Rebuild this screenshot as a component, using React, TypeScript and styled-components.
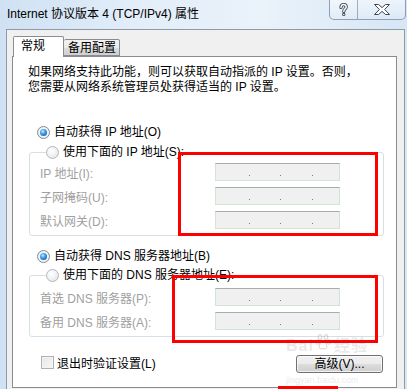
import React from "react";
import styled, { createGlobalStyle } from "styled-components";

const FONT = `"Liberation Sans", "Noto Sans CJK SC", sans-serif`;

const Global = createGlobalStyle`
  html, body { margin: 0; padding: 0; }
  body {
    width: 407px;
    height: 389px;
    overflow: hidden;
    font-family: ${FONT};
    font-size: 12px;
    color: #000;
  }
  * { box-sizing: border-box; }
`;

const Window = styled.div`
  position: relative;
  width: 407px;
  height: 389px;
  overflow: hidden;
  display: flex;
  flex-direction: column;
  background: linear-gradient(90deg, #cfe1f3 0%, #e3eef9 35%, #eaf2fa 65%, #d6e6f5 100%);
`;

const TitleBar = styled.div`
  height: 29px;
  flex: none;
  display: flex;
  align-items: flex-start;
  padding-left: 7px;
`;

const TitleText = styled.div`
  line-height: 29px;
  font-size: 12px;
  color: #000;
  white-space: nowrap;
`;

const CaptionGroup = styled.div`
  margin-left: auto;
  margin-right: 1px;
  display: flex;
  height: 20px;
  border: 1px solid rgba(70, 90, 115, 0.55);
  border-top: none;
  border-radius: 0 0 5px 5px;
  overflow: hidden;
  background: linear-gradient(180deg, rgba(255,255,255,0.55) 0%, rgba(225,236,247,0.35) 100%);
`;

const CaptionButton = styled.div<{ $w: number; $sep?: boolean }>`
  width: ${(p) => p.$w}px;
  height: 100%;
  display: flex;
  align-items: center;
  justify-content: center;
  border-right: ${(p) => (p.$sep ? "1px solid rgba(70, 90, 115, 0.45)" : "none")};
`;

const Client = styled.div`
  flex: 1;
  margin-left: 6px;
  width: 399px;
  background: #f0f0f0;
  border: 1px solid #8e9aa8;
  border-bottom: none;
  padding: 6px 0 1px 5px;
  display: flex;
  flex-direction: column;
`;

const TabRow = styled.div`
  display: flex;
  align-items: flex-end;
  height: 20px;
  margin-left: 1px;
  position: relative;
  z-index: 1;
`;

const Tab = styled.div<{ $active?: boolean; $w: number; $pl: number }>`
  width: ${(p) => p.$w}px;
  height: ${(p) => (p.$active ? 21 : 17)}px;
  margin-bottom: ${(p) => (p.$active ? -1 : 0)}px;
  padding-left: ${(p) => p.$pl}px;
  border: 1px solid #898c95;
  border-bottom: ${(p) => (p.$active ? "none" : "1px solid #898c95")};
  border-left: ${(p) => (p.$active ? "1px solid #898c95" : "none")};
  border-radius: 2px 2px 0 0;
  background: ${(p) => (p.$active ? "#fff" : "linear-gradient(180deg, #f2f2f2 0%, #ebebeb 50%, #dddddd 51%, #cfcfcf 100%)")};
  line-height: ${(p) => (p.$active ? 19 : 16)}px;
  font-size: 12px;
  white-space: nowrap;
`;

const Panel = styled.div`
  flex: 1;
  width: 385px;
  background: #fff;
  border: 1px solid #898c95;
  display: flex;
  flex-direction: column;
`;

const Description = styled.div`
  margin: 8px 0 0 15px;
  line-height: 15px;
  font-size: 12px;
  white-space: nowrap;
`;

const RadioRow = styled.label<{ $mt: number }>`
  display: flex;
  align-items: center;
  height: 16px;
  margin: ${(p) => p.$mt}px 0 0 24px;
  gap: 4px;
  white-space: nowrap;
  font-size: 12px;
  line-height: 16px;
`;

const LegendRow = styled.span`
  display: flex;
  align-items: center;
  height: 16px;
  gap: 4px;
  white-space: nowrap;
  font-size: 12px;
  line-height: 16px;
`;

const RadioCircle = styled.span<{ $checked?: boolean }>`
  position: relative;
  width: 13px;
  height: 13px;
  flex: none;
  border-radius: 50%;
  border: 1px solid ${(p) => (p.$checked ? "#7f8a95" : "#b4b8bc")};
  background: ${(p) =>
    p.$checked
      ? "radial-gradient(circle at 50% 50%, #fff 0%, #e6e9ec 100%)"
      : "radial-gradient(circle at 40% 35%, #ffffff 0%, #eceef0 60%, #d9dde1 100%)"};
  &::after {
    content: "";
    display: ${(p) => (p.$checked ? "block" : "none")};
    position: absolute;
    left: 2px;
    top: 2px;
    width: 7px;
    height: 7px;
    border-radius: 50%;
    background: radial-gradient(circle at 40% 35%, #c9ecff 0%, #4aa6ee 35%, #1460b8 80%, #0b3f86 100%);
  }
`;

const Group = styled.fieldset<{ $pt: number; $mt: number }>`
  margin: ${(p) => p.$mt}px 12px 0 16px;
  padding: ${(p) => p.$pt}px 0 3px 10px;
  border: 1px solid #d5dfe5;
  border-radius: 3px;
  min-width: 0;
`;

const Legend = styled.legend`
  padding: 0 1px 0 0;
  margin-left: 6px;
  height: 16px;
`;

const FieldRow = styled.div`
  display: grid;
  grid-template-columns: 175px 125px;
  align-items: center;
  height: 24px;
`;

const FieldLabel = styled.span`
  color: #a0a0a0;
  white-space: nowrap;
  font-size: 12px;
`;

const IpBox = styled.div`
  height: 18px;
  display: grid;
  grid-template-columns: 33px 1px 30px 1px 31px 1px 1fr;
  align-items: end;
  background: #f0f0f0;
  border: 1px solid #d2e4d2;
  border-top-color: #a9abad;
  padding-bottom: 4px;
`;

const IpDot = styled.span`
  width: 1px;
  height: 1px;
  background: #7a7a7a;
`;

const BottomRow = styled.div`
  margin: 18px 13px 0 28px;
  display: flex;
  align-items: center;
  justify-content: space-between;
`;

const CheckLabel = styled.label`
  display: flex;
  align-items: center;
  gap: 3px;
  font-size: 12px;
  white-space: nowrap;
  margin-top: -3px;
`;

const CheckBox = styled.span`
  width: 13px;
  height: 13px;
  border: 1px solid #b1b1b1;
  background: linear-gradient(135deg, #e6e6e6 0%, #f7f7f7 100%);
  box-shadow: inset 0 0 0 1px #f4f4f4;
`;

const Button = styled.button`
  width: 87px;
  height: 18px;
  padding: 0;
  border: 1px solid #707070;
  border-radius: 3px;
  background: linear-gradient(180deg, #f2f2f2 0%, #ebebeb 50%, #dddddd 51%, #cfcfcf 100%);
  box-shadow: inset 0 0 0 1px rgba(255, 255, 255, 0.7);
  font-family: ${FONT};
  font-size: 12px;
  line-height: 16px;
  color: #000;
`;

const Annotation = styled.div<{ $x: number; $y: number; $w: number; $h: number }>`
  position: absolute;
  left: ${(p) => p.$x}px;
  top: ${(p) => p.$y}px;
  width: ${(p) => p.$w}px;
  height: ${(p) => p.$h}px;
  border: 3px solid #ff0000;
  pointer-events: none;
`;

const Watermark = styled.div`
  position: absolute;
  left: 286px;
  top: 337px;
  display: flex;
  flex-direction: column;
  pointer-events: none;
  color: rgba(140, 140, 140, 0.2);
`;

const WatermarkMain = styled.span`
  display: flex;
  align-items: flex-start;
  font-family: ${FONT};
  font-weight: bold;
  font-size: 16px;
  line-height: 17px;
  letter-spacing: 1px;
`;

const WatermarkSub = styled.span`
  font-family: "Liberation Sans", sans-serif;
  font-size: 9px;
  line-height: 10px;
  margin-top: 21px;
`;

function HelpIcon() {
  return (
    <svg width="9" height="14" viewBox="0 0 10 15">
      <path d="M2.2 4.6 C2.2 2.4 3.6 1.4 5.1 1.4 C6.9 1.4 8 2.6 8 4.1 C8 6 5.3 6.6 5.3 9.2" fill="none" stroke="#3b4656" strokeWidth="3.6" strokeLinecap="round" />
      <path d="M2.2 4.6 C2.2 2.4 3.6 1.4 5.1 1.4 C6.9 1.4 8 2.6 8 4.1 C8 6 5.3 6.6 5.3 9.2" fill="none" stroke="#ffffff" strokeWidth="1.6" strokeLinecap="round" />
      <circle cx="5.3" cy="12.4" r="1.8" fill="#3b4656" />
      <circle cx="5.3" cy="12.4" r="0.8" fill="#ffffff" />
    </svg>
  );
}

function CloseIcon() {
  return (
    <svg width="16" height="11" viewBox="0 0 16 11">
      <polygon
        points="0.5,0.5 4.5,0.5 8,3.6 11.5,0.5 15.5,0.5 10.6,5.5 15.5,10.5 11.5,10.5 8,7.4 4.5,10.5 0.5,10.5 5.4,5.5"
        fill="#ffffff"
        stroke="#3b4656"
        strokeWidth="1"
        strokeLinejoin="round"
      />
    </svg>
  );
}

function PawIcon() {
  return (
    <svg width="18" height="18" viewBox="0 0 18 18" style={{ margin: "-4px 1px 0" }}>
      <g fill="none" stroke="rgba(140,140,140,0.3)" strokeWidth="1.2">
        <ellipse cx="5" cy="4" rx="1.8" ry="2.3" />
        <ellipse cx="11" cy="4" rx="1.8" ry="2.3" />
        <ellipse cx="2.5" cy="9" rx="1.7" ry="2.1" />
        <ellipse cx="14" cy="9" rx="1.7" ry="2.1" />
        <path d="M8 8.5 C5 8.5 3.5 13 4.5 15 C5.5 16.5 7 15.5 8 15.5 C9 15.5 10.5 16.5 11.5 15 C12.5 13 11 8.5 8 8.5 Z" />
      </g>
    </svg>
  );
}

function IpField() {
  return (
    <IpBox>
      <span />
      <IpDot />
      <span />
      <IpDot />
      <span />
      <IpDot />
      <span />
    </IpBox>
  );
}

export default function App() {
  return (
    <>
      <Global />
      <Window>
        <TitleBar>
          <TitleText>Internet 协议版本 4 (TCP/IPv4) 属性</TitleText>
          <CaptionGroup>
            <CaptionButton $w={28} $sep>
              <HelpIcon />
            </CaptionButton>
            <CaptionButton $w={47}>
              <CloseIcon />
            </CaptionButton>
          </CaptionGroup>
        </TitleBar>
        <Client>
          <TabRow>
            <Tab $active $w={51} $pl={7}>常规</Tab>
            <Tab $w={56} $pl={4}>备用配置</Tab>
          </TabRow>
          <Panel>
            <Description>
              如果网络支持此功能，则可以获取自动指派的 IP 设置。否则，
              <br />
              您需要从网络系统管理员处获得适当的 IP 设置。
            </Description>

            <RadioRow $mt={29}>
              <RadioCircle $checked />
              <span>自动获得 IP 地址(O)</span>
            </RadioRow>

            <Group $pt={0} $mt={4}>
              <Legend>
                <LegendRow>
                  <RadioCircle />
                  <span>使用下面的 IP 地址(S):</span>
                </LegendRow>
              </Legend>
              <FieldRow>
                <FieldLabel>IP 地址(I):</FieldLabel>
                <IpField />
              </FieldRow>
              <FieldRow>
                <FieldLabel>子网掩码(U):</FieldLabel>
                <IpField />
              </FieldRow>
              <FieldRow>
                <FieldLabel>默认网关(D):</FieldLabel>
                <IpField />
              </FieldRow>
            </Group>

            <RadioRow $mt={12}>
              <RadioCircle $checked />
              <span>自动获得 DNS 服务器地址(B)</span>
            </RadioRow>

            <Group $pt={2} $mt={3}>
              <Legend>
                <LegendRow>
                  <RadioCircle />
                  <span>使用下面的 DNS 服务器地址(E):</span>
                </LegendRow>
              </Legend>
              <FieldRow>
                <FieldLabel>首选 DNS 服务器(P):</FieldLabel>
                <IpField />
              </FieldRow>
              <FieldRow>
                <FieldLabel>备用 DNS 服务器(A):</FieldLabel>
                <IpField />
              </FieldRow>
            </Group>

            <BottomRow>
              <CheckLabel>
                <CheckBox />
                <span>退出时验证设置(L)</span>
              </CheckLabel>
              <Button>高级(V)...</Button>
            </BottomRow>
          </Panel>
        </Client>

        <Watermark>
          <WatermarkMain>
            <span>Bai</span>
            <PawIcon />
            <span>经验</span>
          </WatermarkMain>
          <WatermarkSub>jingyan.baidu.com</WatermarkSub>
        </Watermark>
        <Annotation $x={178} $y={152} $w={200} $h={84} />
        <Annotation $x={172} $y={275} $w={206} $h={68} />
        <Annotation $x={278} $y={386} $w={60} $h={10} />
      </Window>
    </>
  );
}
